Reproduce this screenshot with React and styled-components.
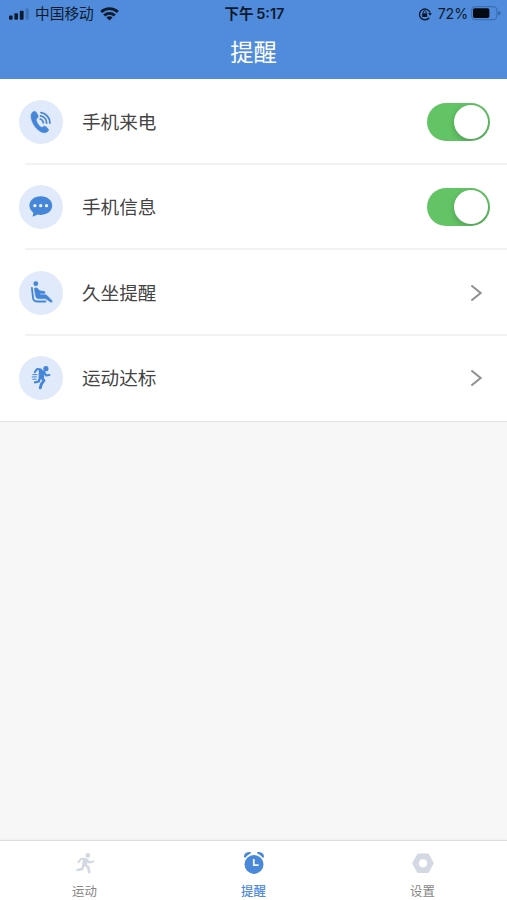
import React, { useState } from 'react';
import styled, { createGlobalStyle } from 'styled-components';

const GlobalStyle = createGlobalStyle`
  * { box-sizing: border-box; }

  body {
    margin: 0;
    background: #f7f7f7;
    font-family: "Liberation Sans", "Noto Sans CJK SC", sans-serif;
  }
`;

const Screen = styled.div`
  width: 100%;
  height: 100vh;
  display: flex;
  flex-direction: column;
  background: #f7f7f7;
  overflow: hidden;
`;

const Header = styled.header`
  height: 79px;
  flex: none;
  background: #508cdb;
`;

const StatusBar = styled.div`
  height: 27px;
  display: grid;
  grid-template-columns: 1fr auto 1fr;
  align-items: center;
  padding: 0 6px 0 9px;
  color: #0c1a2e;
  font-family: Inter, "Noto Sans CJK SC", sans-serif;
  font-size: 14.7px;
  line-height: 27px;
  white-space: nowrap;

  svg { display: block; flex: none; }
`;

const StatusGroup = styled.div`
  display: flex;
  align-items: center;
  justify-content: ${props => props.$end ? 'flex-end' : 'flex-start'};
`;

const Carrier = styled.span`
  margin: 0 6px 0 6px;
  padding-top: 2px;
  line-height: 25px;
`;

const Clock = styled.span`
  margin-right: 1px;
  font-size: 14.5px;
  font-weight: 600;
  word-spacing: -1px;
`;

const Percent = styled.span`
  margin: 0 3px 0 6px;
  font-size: 14.2px;
  letter-spacing: -0.1px;
`;

const Title = styled.h1`
  margin: 0;
  height: 52px;
  line-height: 52px;
  text-align: center;
  color: #fff;
  font-size: 23.3px;
  font-weight: 400;
`;

const List = styled.ul`
  margin: 0;
  padding: 0;
  list-style: none;
  background: #fff;
  border-bottom: 1px solid #e2e2e2;
`;

const Row = styled.li`
  height: 85.5px;
  display: flex;
  align-items: center;
  padding: 0 17px 0 19px;

  /* the divider starts a little to the right of the icon edge */
  &:not(:last-child) {
    background: linear-gradient(#f2f2f2, #f2f2f2) 25px 100% / 100% 2px no-repeat;
  }
`;

const IconCircle = styled.div`
  width: 44px;
  height: 44px;
  flex: none;
  border-radius: 50%;
  background: #e0eafa;
  color: #4686d8;

  svg { display: block; }
`;

const Label = styled.span`
  flex: 1;
  margin-left: 19px;
  padding-top: 2px;
  color: #444;
  font-size: 18.6px;
  line-height: 28px;
`;

const Toggle = styled.button`
  width: 63px;
  height: 38px;
  flex: none;
  padding: 2px;
  display: flex;
  justify-content: ${props => props.$on ? 'flex-end' : 'flex-start'};
  border: none;
  border-radius: 19px;
  background: ${props => props.$on ? '#63c466' : '#e5e5e5'};
  overflow: hidden;
  cursor: pointer;
`;

const Knob = styled.span`
  width: 34px;
  height: 34px;
  border-radius: 50%;
  background: #fff;
  box-shadow: 0 2px 6px rgba(0, 0, 0, 0.22);
`;

const Arrow = styled.svg`
  width: 12px;
  height: 18px;
  margin-right: 8px;
`;

const TabBar = styled.nav`
  height: 60px;
  flex: none;
  margin-top: auto;
  display: grid;
  grid-template-columns: repeat(3, 1fr);
  background: #fff;
  border-top: 1px solid #dedede;
  box-shadow: 0 -1px 2px rgba(0, 0, 0, 0.04);
`;

const Tab = styled.button`
  display: flex;
  flex-direction: column;
  align-items: center;
  padding: 10px 0 0;
  border: none;
  background: none;
  color: ${props => props.$active ? '#508cdb' : '#858585'};
  font-family: inherit;
  font-size: 12.4px;
  font-weight: ${props => props.$active ? 500 : 400};
  line-height: 18px;
  cursor: pointer;

  svg {
    display: block;
    margin-bottom: 8px;
    color: ${props => props.$active ? '#4a88da' : '#d3d8e2'};
  }
`;

const stroke = {
  fill: 'none',
  stroke: 'currentColor',
  strokeLinecap: 'round',
  strokeLinejoin: 'round',
};

function SignalIcon() {
  return (
    <svg width="20" height="12" viewBox="0 0 20 12" fill="#0c1a2e">
      <rect x="0" y="7.5" width="3.6" height="4.2" rx="1" />
      <rect x="5.4" y="5.3" width="3.6" height="6.4" rx="1" />
      <rect x="10.8" y="2.8" width="3.8" height="8.9" rx="1" />
      <rect x="16.6" y="0.5" width="3.2" height="11.2" rx="1" opacity="0.22" />
    </svg>
  );
}

function WifiIcon() {
  return (
    <svg width="19" height="14" viewBox="0 0 19 14">
      <g fill="none" stroke="#0c1a2e" strokeWidth="2.8">
        <path d="M1.2 5 C5.8 0.5 13.2 0.5 17.8 5" />
        <path d="M4.2 8.4 C7.2 5.6 11.8 5.6 14.8 8.4" />
      </g>
      <path d="M9.5 13.4 L6.4 10.4 C8.2 9 10.8 9 12.6 10.4 Z" fill="#0c1a2e" />
    </svg>
  );
}

function RotationLockIcon() {
  return (
    <svg width="14" height="14" viewBox="0 0 14 14">
      <path d="M11.2 10.7 A5.4 5.4 0 1 1 12 5.6" fill="none" stroke="#0c1a2e" strokeWidth="1.4" />
      <path d="M10.2 6 H13.8 L12.1 8.8 Z" fill="#0c1a2e" />
      <rect x="4.2" y="6.2" width="5" height="3.8" rx="0.6" fill="#0c1a2e" />
      <path d="M5.2 6.5 V5.2 a1.5 1.5 0 0 1 3 0 V6.5" fill="none" stroke="#0c1a2e" strokeWidth="1" />
    </svg>
  );
}

function BatteryIcon() {
  return (
    <svg width="30" height="15" viewBox="0 0 30 15">
      <rect x="0.7" y="0.7" width="25.2" height="13" rx="3.6" fill="none" stroke="#3b6fb3" strokeWidth="1.2" />
      <rect x="2" y="2.3" width="16.4" height="9.8" rx="1.8" fill="#050a12" />
      <path d="M27.4 5 Q29.4 5.6 29.4 7.2 Q29.4 8.8 27.4 9.4 Z" fill="#315f9c" />
    </svg>
  );
}

function PhoneIcon() {
  return (
    <svg width="44" height="44" viewBox="0 0 44 44">
      <path
        fill="currentColor"
        stroke="currentColor"
        strokeWidth="0.6"
        d="M14.2 11.8 C15.4 11.1 16.7 11.3 17.3 12.4 L18.9 15.3 C19.5 16.5 19.2 17.5 18.1 18.2 C17.2 18.8 17.1 19.8 17.5 21 C18.3 23.2 19.7 25.3 21.3 26.7 C22.3 27.5 23.2 27.5 24 26.8 C24.9 25.9 26 25.9 27 26.8 L28.8 28.5 C29.8 29.5 29.7 30.6 28.7 31.4 C26.5 33.2 23.6 33.1 20.6 31 C16.2 27.9 12.8 22.4 12.1 17.2 C11.8 14.7 12.4 12.8 14.2 11.8 Z"
      />
      <g {...stroke} strokeWidth="1.8">
        <path d="M21.2 19 A4.2 4.2 0 0 1 24.3 22.8" />
        <path d="M21.6 15.9 A7.2 7.2 0 0 1 27.6 23" />
        <path d="M22 12.7 A10.4 10.4 0 0 1 30.9 23" />
      </g>
    </svg>
  );
}

function MessageIcon() {
  return (
    <svg width="44" height="44" viewBox="0 0 44 44">
      <path
        fill="currentColor"
        d="M21.8 11.3 C28.4 11.3 33.2 15.3 33.2 20.6 C33.2 25.9 28.4 29.9 21.8 29.9 C20.6 29.9 19.5 29.8 18.4 29.5 C16.9 30.6 15.2 31.2 13.3 31.4 C14.1 30.2 14.4 29 14.2 27.6 C12 25.9 10.4 23.5 10.4 20.6 C10.4 15.3 15.2 11.3 21.8 11.3 Z"
      />
      <g fill="#eef4fd">
        <circle cx="15.9" cy="20.7" r="1.65" />
        <circle cx="21.7" cy="20.7" r="1.65" />
        <circle cx="27.5" cy="20.7" r="1.65" />
      </g>
    </svg>
  );
}

function SeatIcon() {
  return (
    <svg width="44" height="44" viewBox="0 0 44 44">
      <circle cx="16.8" cy="12.7" r="2.4" fill="currentColor" />
      <path
        d="M15.4 17.6 Q17 16 18.6 17.6 L20.6 19.8 L25.6 20.6 Q26.6 21.5 25.4 22.4 L20.8 22.3 L21.2 23.8 H26.2 Q27.2 23.8 28 24.6 L33 29.8 Q33.6 31.3 32.1 31.3 L26.4 27.6 H19.6 Q17.3 27.6 16.8 25.4 Z"
        fill="currentColor"
        stroke="currentColor"
        strokeWidth="0.7"
        strokeLinejoin="round"
      />
      <path d="M12.9 17 L14.1 27.4 Q14.7 30.5 17.6 30.5 H26.4" {...stroke} strokeWidth="1.8" />
    </svg>
  );
}

function SprintIcon() {
  return (
    <svg width="44" height="44" viewBox="0 0 44 44">
      <circle cx="26.9" cy="12.7" r="2.6" fill="currentColor" />
      <path d="M20.8 13.8 L25.2 15.8 L23.9 21.6 L20.6 21.6 Z" fill="currentColor" stroke="currentColor" strokeWidth="2" strokeLinejoin="round" />
      <g {...stroke}>
        <path d="M22 13.4 L18 13.1 L15.8 16.2" strokeWidth="2" />
        <path d="M25.2 16 L27.2 19.5 L30.4 19" strokeWidth="2" />
        <path d="M22.6 21.3 L25 24.5 L22.4 28 L21.3 31.8" strokeWidth="2.9" />
        <path d="M21.2 21.5 L19.7 25.5 L16 26.3" strokeWidth="2.3" />
        <path d="M13.8 18.6 H18 M13.2 20.9 H17.6 M13.8 23.2 H17.2" strokeWidth="1" />
      </g>
    </svg>
  );
}

function RunTabIcon() {
  return (
    <svg width="22" height="24" viewBox="0 0 22 24">
      <circle cx="13.8" cy="4.4" r="2.4" fill="currentColor" />
      <path d="M9.8 8 L13.4 8.8 L12 14 L9 13.6 Z" fill="currentColor" stroke="currentColor" strokeWidth="1.8" strokeLinejoin="round" />
      <g {...stroke} strokeWidth="2">
        <path d="M11.6 7.8 L6.9 7.9 L4.5 11.2" />
        <path d="M13 8.8 L15.3 11.5 L19.4 10.6" />
        <path d="M11 13.8 L14.4 16.6 L15.2 21.2" strokeWidth="2.6" />
        <path d="M9.6 13.8 L8.2 18 L3.4 19" strokeWidth="2.5" />
      </g>
    </svg>
  );
}

function AlarmIcon() {
  return (
    <svg width="22" height="24" viewBox="0 0 22 24">
      <circle cx="11" cy="13.4" r="9.5" fill="currentColor" />
      <path d="M1.8 6 Q1.4 1.8 7.2 1.8 Q4 3.2 1.8 6 Z M20.2 6 Q20.6 1.8 14.8 1.8 Q18 3.2 20.2 6 Z" fill="currentColor" stroke="currentColor" strokeWidth="1.5" strokeLinejoin="round" />
      <path d="M10.8 8.1 V14.2 H15.6" fill="none" stroke="#f1f6fd" strokeWidth="1.8" />
    </svg>
  );
}

function SettingsIcon() {
  return (
    <svg width="22" height="24" viewBox="0 0 22 24">
      <path
        d="M6.3 4.1 H15.7 L20.2 12.3 L15.7 20.5 H6.3 L1.8 12.3 Z"
        fill="currentColor"
        stroke="currentColor"
        strokeWidth="3"
        strokeLinejoin="round"
      />
      <circle cx="11" cy="12.3" r="4.1" fill="#fff" />
    </svg>
  );
}

const items = [
  { key: 'call', label: '手机来电', Icon: PhoneIcon, toggle: true },
  { key: 'message', label: '手机信息', Icon: MessageIcon, toggle: true },
  { key: 'sedentary', label: '久坐提醒', Icon: SeatIcon },
  { key: 'goal', label: '运动达标', Icon: SprintIcon },
];

const tabs = [
  { key: 'sport', label: '运动', Icon: RunTabIcon },
  { key: 'remind', label: '提醒', Icon: AlarmIcon },
  { key: 'settings', label: '设置', Icon: SettingsIcon },
];

export default function App() {
  const [enabled, setEnabled] = useState({ call: true, message: true });
  const [activeTab, setActiveTab] = useState('remind');

  const toggle = (key) => setEnabled(prev => ({ ...prev, [key]: !prev[key] }));

  return (
    <Screen>
      <GlobalStyle />
      <Header>
        <StatusBar>
          <StatusGroup>
            <SignalIcon />
            <Carrier>中国移动</Carrier>
            <WifiIcon />
          </StatusGroup>
          <Clock>下午 5:17</Clock>
          <StatusGroup $end>
            <RotationLockIcon />
            <Percent>72%</Percent>
            <BatteryIcon />
          </StatusGroup>
        </StatusBar>
        <Title>提醒</Title>
      </Header>

      <List>
        {items.map(({ key, label, Icon, toggle: hasToggle }) => (
          <Row key={key}>
            <IconCircle><Icon /></IconCircle>
            <Label>{label}</Label>
            {hasToggle ? (
              <Toggle $on={enabled[key]} aria-label={label} onClick={() => toggle(key)}>
                <Knob />
              </Toggle>
            ) : (
              <Arrow viewBox="0 0 12 18">
                <path d="M1.4 1.5 L10.6 9 L1.4 16.5" fill="none" stroke="#929292" strokeWidth="2.1" />
              </Arrow>
            )}
          </Row>
        ))}
      </List>

      <TabBar>
        {tabs.map(({ key, label, Icon }) => (
          <Tab key={key} $active={key === activeTab} onClick={() => setActiveTab(key)}>
            <Icon />
            {label}
          </Tab>
        ))}
      </TabBar>
    </Screen>
  );
}
